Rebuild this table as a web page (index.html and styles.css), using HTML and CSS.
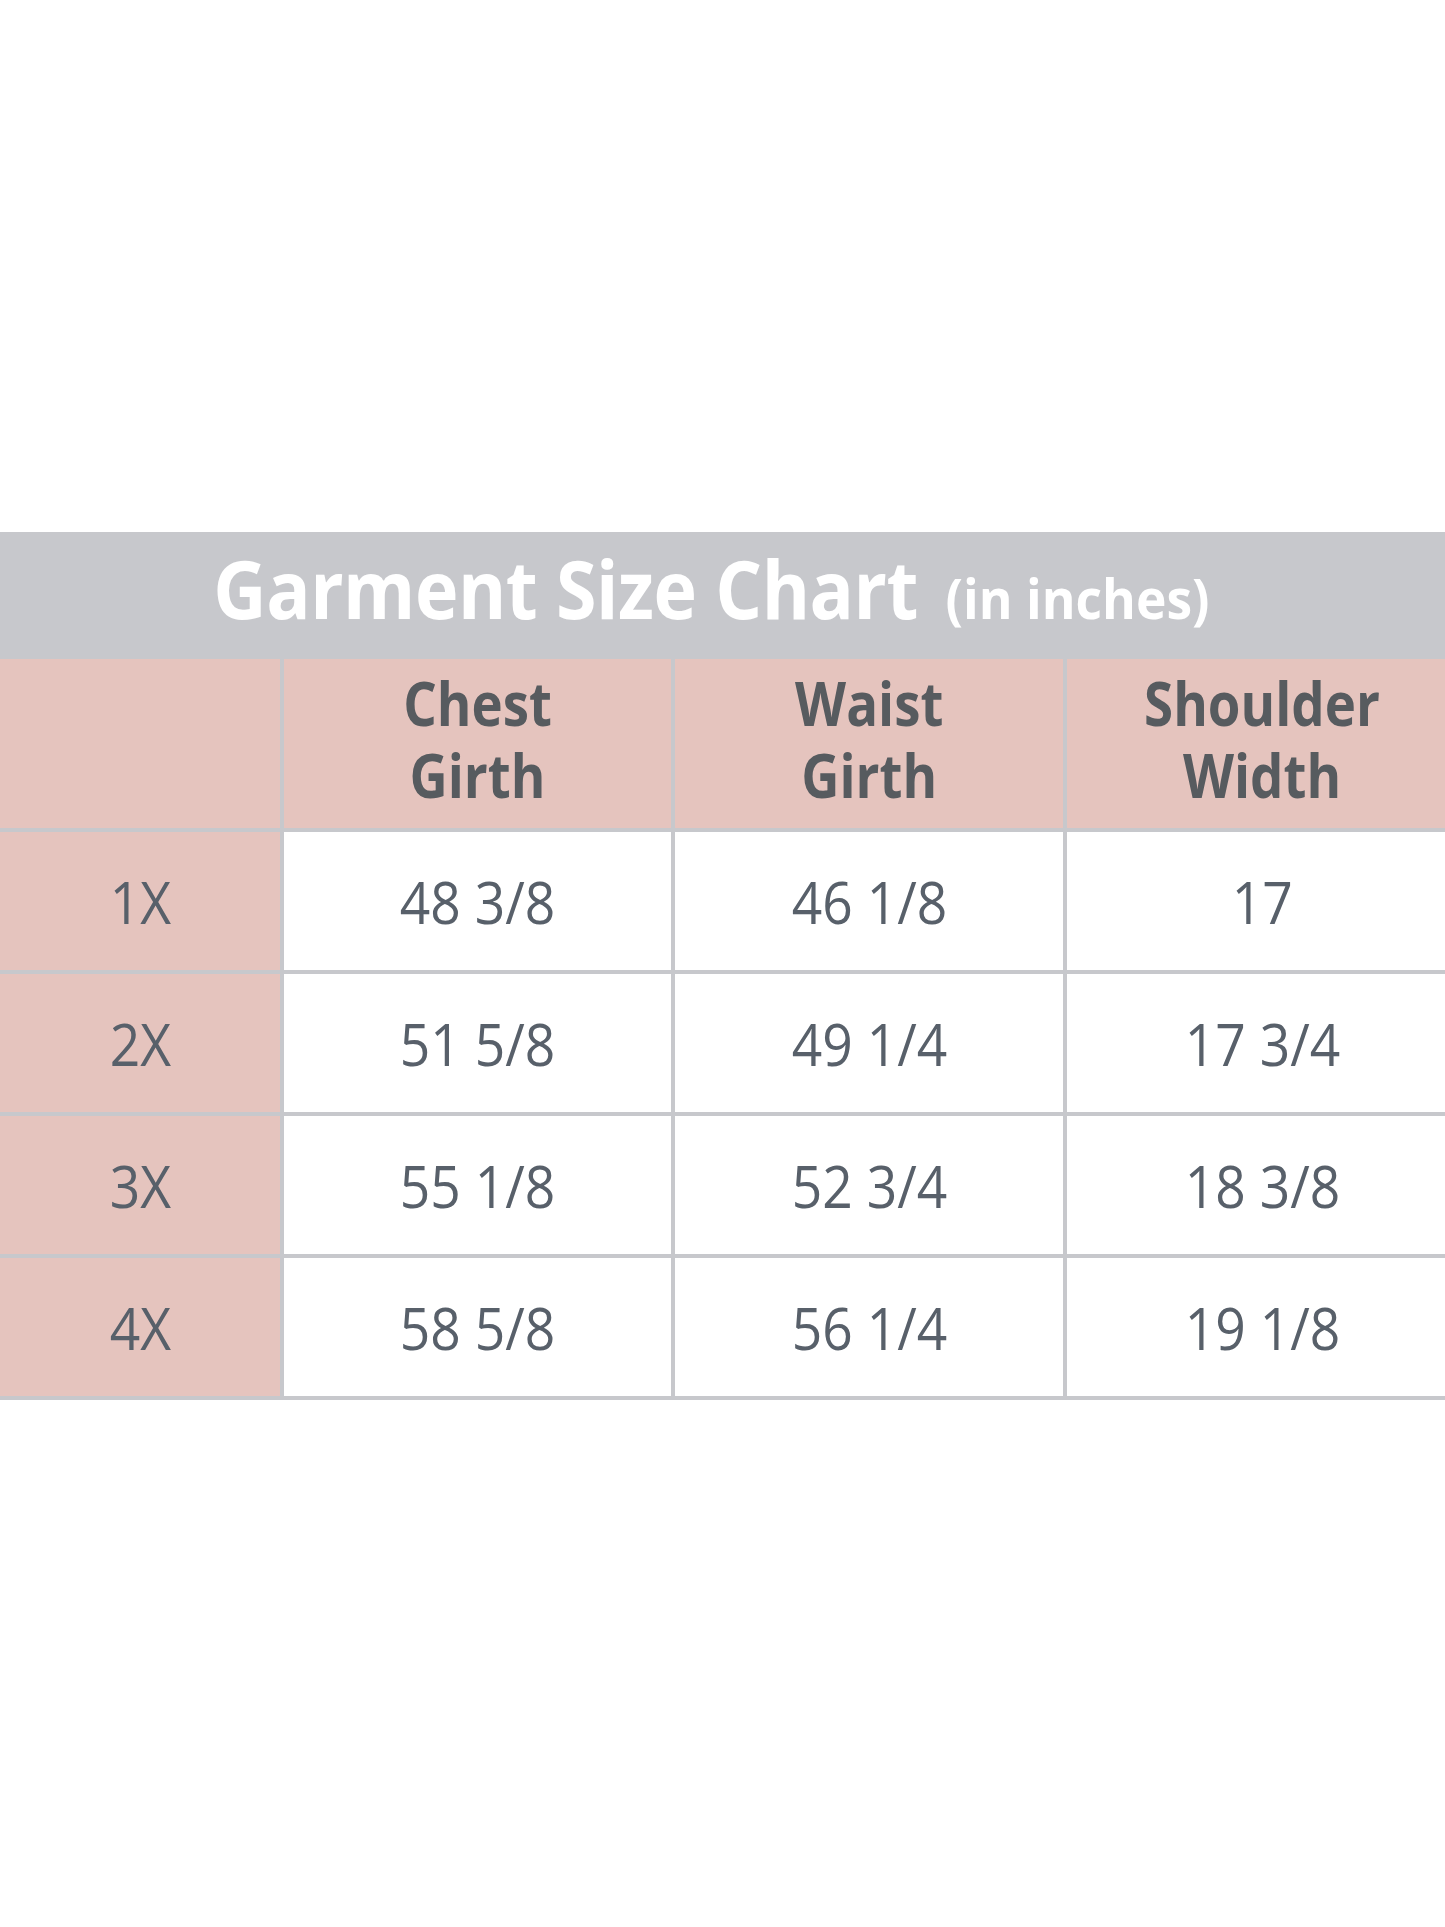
FILE: index.html
```html
<!DOCTYPE html>
<html lang="en">
<head>
<meta charset="utf-8">
<title>Garment Size Chart</title>
<link rel="stylesheet" href="styles.css">
</head>
<body>
<main class="page">
  <section class="chart">
    <header class="chart-title">
      <span class="squeeze title-squeeze"><span class="title-main">Garment Size Chart</span><span class="title-unit">(in inches)</span></span>
    </header>
    <div class="grid">
      <div class="cell head blank"></div>
      <div class="cell head"><span class="squeeze">Chest<br>Girth</span></div>
      <div class="cell head"><span class="squeeze">Waist<br>Girth</span></div>
      <div class="cell head"><span class="squeeze">Shoulder<br>Width</span></div>

      <div class="cell size"><span class="squeeze body-squeeze">1X</span></div>
      <div class="cell val"><span class="squeeze body-squeeze">48 3/8</span></div>
      <div class="cell val"><span class="squeeze body-squeeze">46 1/8</span></div>
      <div class="cell val"><span class="squeeze body-squeeze">17</span></div>

      <div class="cell size"><span class="squeeze body-squeeze">2X</span></div>
      <div class="cell val"><span class="squeeze body-squeeze">51 5/8</span></div>
      <div class="cell val"><span class="squeeze body-squeeze">49 1/4</span></div>
      <div class="cell val"><span class="squeeze body-squeeze">17 3/4</span></div>

      <div class="cell size"><span class="squeeze body-squeeze">3X</span></div>
      <div class="cell val"><span class="squeeze body-squeeze">55 1/8</span></div>
      <div class="cell val"><span class="squeeze body-squeeze">52 3/4</span></div>
      <div class="cell val"><span class="squeeze body-squeeze">18 3/8</span></div>

      <div class="cell size"><span class="squeeze body-squeeze">4X</span></div>
      <div class="cell val"><span class="squeeze body-squeeze">58 5/8</span></div>
      <div class="cell val"><span class="squeeze body-squeeze">56 1/4</span></div>
      <div class="cell val"><span class="squeeze body-squeeze">19 1/8</span></div>
    </div>
  </section>
</main>
</body>
</html>
```
FILE: styles.css
```css
html, body {
  margin: 0;
  padding: 0;
  background: #ffffff;
  overflow: hidden;
}

body {
  font-family: "Open Sans", "DejaVu Sans", sans-serif;
  width: 1445px;
  height: 1927px;
}

.page {
  padding-top: 532px;
}

.chart {
  width: 1458px;
}

.squeeze {
  display: inline-block;
  transform: scaleX(0.88);
}

.title-squeeze {
  transform: scaleX(0.92);
}

.body-squeeze {
  transform: scaleX(0.92);
}

.chart-title {
  height: 127px;
  background: #c7c8cc;
  color: #ffffff;
  display: flex;
  align-items: center;
  justify-content: center;
  padding-right: 36px;
  padding-bottom: 16px;
  box-sizing: border-box;
}

.title-main {
  font-weight: 700;
  font-size: 80px;
  line-height: 1;
  letter-spacing: -0.5px;
}

.title-unit {
  font-weight: 700;
  font-size: 56px;
  margin-left: 30px;
  line-height: 1;
}

.grid {
  display: grid;
  grid-template-columns: 280px 387px 388px 1fr;
  grid-template-rows: 169px repeat(4, 138px);
  gap: 4px;
  background: #c7c8cc;
  padding-bottom: 4px;
}

.cell {
  display: flex;
  align-items: center;
  justify-content: center;
  text-align: center;
  background: #ffffff;
}

.head {
  background: #e5c4be;
  color: #575b5f;
  font-weight: 700;
  font-size: 60px;
  line-height: 72px;
  padding-bottom: 10px;
  box-sizing: border-box;
}

.size {
  background: #e5c4be;
  color: #58606a;
  font-size: 58px;
  font-weight: 400;
}

.val {
  color: #58606a;
  font-size: 58px;
  font-weight: 400;
}
```
